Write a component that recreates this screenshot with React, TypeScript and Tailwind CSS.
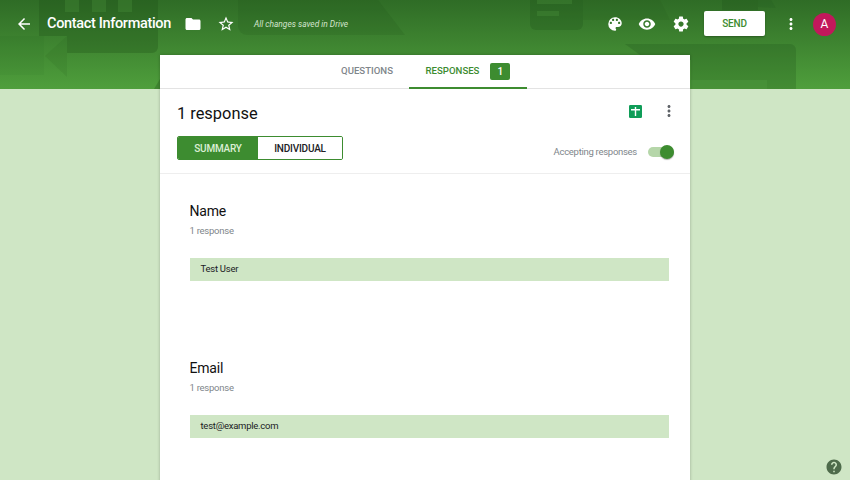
const FONT = "font-['Roboto','Liberation_Sans',sans-serif]";

function Icon({ d, size = 24, className = "" }: { d: string; size?: number; className?: string }) {
  return (
    <svg width={size} height={size} viewBox="0 0 24 24" fill="currentColor" className={className}>
      <path d={d} />
    </svg>
  );
}

const ICONS = {
  back: "M20 11H7.83l5.59-5.59L12 4l-8 8 8 8 1.41-1.41L7.83 13H20v-2z",
  folder: "M10 4H4c-1.1 0-2 .9-2 2v12c0 1.1.9 2 2 2h16c1.1 0 2-.9 2-2V8c0-1.1-.9-2-2-2h-8l-2-2z",
  star: "M22 9.24l-7.19-.62L12 2 9.19 8.63 2 9.24l5.46 4.73L5.82 21 12 17.27 18.18 21l-1.63-7.03L22 9.24zM12 15.4l-3.76 2.27 1-4.28-3.32-2.88 4.38-.38L12 6.1l1.71 4.04 4.38.38-3.32 2.88 1 4.28L12 15.4z",
  palette: "M12 3a9 9 0 0 0 0 18c.83 0 1.5-.67 1.5-1.5 0-.39-.15-.74-.39-1.01-.23-.26-.38-.61-.38-.99 0-.83.67-1.5 1.5-1.5H16c2.76 0 5-2.24 5-5 0-4.42-4.03-8-9-8zm-5.5 9c-.83 0-1.5-.67-1.5-1.5S5.67 9 6.5 9 8 9.67 8 10.5 7.33 12 6.5 12zm3-4C8.67 8 8 7.33 8 6.5S8.67 5 9.5 5s1.5.67 1.5 1.5S10.33 8 9.5 8zm5 0c-.83 0-1.5-.67-1.5-1.5S13.67 5 14.5 5s1.5.67 1.5 1.5S15.33 8 14.5 8zm3 4c-.83 0-1.5-.67-1.5-1.5S16.67 9 17.5 9s1.5.67 1.5 1.5-.67 1.5-1.5 1.5z",
  eye: "M12 4.5C7 4.5 2.73 7.61 1 12c1.73 4.39 6 7.5 11 7.5s9.27-3.11 11-7.5c-1.73-4.39-6-7.5-11-7.5zM12 17c-2.76 0-5-2.24-5-5s2.24-5 5-5 5 2.24 5 5-2.24 5-5 5zm0-8c-1.66 0-3 1.34-3 3s1.34 3 3 3 3-1.34 3-3-1.34-3-3-3z",
  gear: "M19.43 12.98c.04-.32.07-.64.07-.98s-.03-.66-.07-.98l2.11-1.65c.19-.15.24-.42.12-.64l-2-3.46c-.12-.22-.39-.3-.61-.22l-2.49 1c-.52-.4-1.08-.73-1.69-.98l-.38-2.65A.488.488 0 0 0 14 2h-4c-.25 0-.46.18-.49.42l-.38 2.65c-.61.25-1.17.59-1.69.98l-2.49-1c-.23-.09-.49 0-.61.22l-2 3.46c-.13.22-.07.49.12.64l2.11 1.65c-.04.32-.07.65-.07.98s.03.66.07.98l-2.11 1.65c-.19.15-.24.42-.12.64l2 3.46c.12.22.39.3.61.22l2.49-1c.52.4 1.08.73 1.69.98l.38 2.65c.03.24.24.42.49.42h4c.25 0 .46-.18.49-.42l.38-2.65c.61-.25 1.17-.59 1.69-.98l2.49 1c.23.09.49 0 .61-.22l2-3.46c.12-.22.07-.49-.12-.64l-2.11-1.65zM12 15.5c-1.93 0-3.5-1.57-3.5-3.5s1.57-3.5 3.5-3.5 3.5 1.57 3.5 3.5-1.57 3.5-3.5 3.5z",
  dots: "M12 8c1.1 0 2-.9 2-2s-.9-2-2-2-2 .9-2 2 .9 2 2 2zm0 2c-1.1 0-2 .9-2 2s.9 2 2 2 2-.9 2-2-.9-2-2-2zm0 6c-1.1 0-2 .9-2 2s.9 2 2 2 2-.9 2-2-.9-2-2-2z",
  help: "M12 2C6.48 2 2 6.48 2 12s4.48 10 10 10 10-4.48 10-10S17.52 2 12 2zm1 17h-2v-2h2v2zm2.07-7.75l-.9.92C13.45 12.9 13 13.5 13 15h-2v-.5c0-1.1.45-2.1 1.17-2.83l1.24-1.26c.37-.36.59-.86.59-1.41 0-1.1-.9-2-2-2s-2 .9-2 2H8c0-2.21 1.79-4 4-4s4 1.79 4 4c0 .88-.36 1.68-.93 2.25z",
};

// the faded form/list shapes behind the title bar
function HeaderPattern() {
  return (
    <svg width="850" height="89" viewBox="0 0 850 89" className="absolute left-0 top-0" aria-hidden="true">
      <g fill="#1d4f18">
        <path d="M39 0h119v47a6 6 0 0 1-6 6H67V36H39z" fillOpacity="0.3" />
        <path d="M67 36v41L45 56z" fillOpacity="0.1" />
        <path d="M0 36h44v39H0z" fillOpacity="0.05" />
        <path d="M154 89l6-10v10z" fillOpacity="0.3" />
        <path d="M238 0h140l27 35H247a9 9 0 0 1-9-9z" fillOpacity="0.16" />
        <path d="M583 0h77l10 20h-87z" fillOpacity="0.12" />
        <path d="M530 0h53v24a6 6 0 0 1-6 6h-41a6 6 0 0 1-6-6z" fillOpacity="0.25" />
        <path d="M722 0h36v10h-36z" fillOpacity="0.22" />
        <path d="M758 0h13l5 8-18-1z" fillOpacity="0.15" />
        <path d="M625 44h165a6 6 0 0 1 6 6v39H691V60h-44z" fillOpacity="0.24" />
      </g>
      <g fill="#5aa847" fillOpacity="0.22">
        <path d="M65 0h14v12H65zM92 0h14v12H92zM118 0h14v12h-14z" />
        <path d="M537 0h35v4h-35zM537 11h22v5h-22z" />
        <path d="M691 80h76v9h-76z" />
      </g>
    </svg>
  );
}

function Section({ title, value }: { title: string; value: string }) {
  return (
    <section className="h-[157px] pl-[29.5px] pr-[21px] pt-[27.5px]">
      <h2 className="text-[14px] leading-[18px] tracking-[-0.2px] text-[#111]">{title}</h2>
      <p className="mt-[4.5px] text-[9.5px] leading-[14px] tracking-[-0.25px] text-[#80868b]">1 response</p>
      <div className="mt-[20px] flex h-[23px] items-center bg-[#cfe6c5] px-[11px] text-[9.5px] tracking-[-0.25px] text-[#202124]">
        {value}
      </div>
    </section>
  );
}

export default function App() {
  return (
    <div className={`relative h-[480px] w-[850px] overflow-hidden bg-[#cfe6c5] ${FONT}`}>
      <header className="relative h-[89px] bg-gradient-to-b from-[#2f6c26] to-[#4f9f3c]">
        <HeaderPattern />
        <div className="relative flex h-[48px] items-center text-white">
          <Icon d={ICONS.back} size={18} className="ml-[14.5px]" />
          <h1 className="ml-[14.5px] text-[14.5px] font-medium leading-none tracking-[-0.34px]">Contact Information</h1>
          <Icon d={ICONS.folder} size={18} className="ml-[13.5px]" />
          <Icon d={ICONS.star} size={18} className="ml-[15px]" />
          <span className="ml-[18.5px] text-[8.4px] italic text-[#d3e4cd]">All changes saved in Drive</span>
          <div className="ml-auto flex items-center">
            <Icon d={ICONS.palette} size={18} />
            <Icon d={ICONS.eye} size={18} className="ml-[14.5px]" />
            <Icon d={ICONS.gear} size={18} className="ml-[15.5px]" />
            <button className="ml-[14.5px] -mt-[2px] h-[25px] w-[61px] rounded-[2px] bg-white text-[10px] font-medium tracking-[-0.2px] text-[#3d8c30] shadow-[0_1px_2px_rgba(0,0,0,0.3)]">
              SEND
            </button>
            <Icon d={ICONS.dots} size={18} className="ml-[17px]" />
            <div className="ml-[13px] mr-[14px] flex h-[23px] w-[23px] items-center justify-center rounded-full bg-[#c2185b] text-[12px]">
              A
            </div>
          </div>
        </div>
      </header>

      <main className="relative mx-auto -mt-[34px] w-[530px] bg-white shadow-[0_0_3px_rgba(0,0,0,0.25)]">
        <nav className="flex h-[34px] justify-center border-b border-[#e3e3e3] pl-[2px] text-[9.6px] font-medium">
          <div className="flex w-[84px] items-center justify-center text-[#80868b]">QUESTIONS</div>
          <div className="-mb-px flex w-[118px] items-center justify-center gap-[11px] border-b-2 border-[#3d8c30] text-[#3d8c30]">
            RESPONSES
            <span className="flex h-[17px] w-[20px] items-center justify-center rounded-[2px] bg-[#3d8c30] text-[10px] text-white">1</span>
          </div>
        </nav>

        <div className="h-[85px] border-b border-[#eeeeee] px-[17px] pt-[16px]">
          <div className="flex items-center justify-between">
            <h2 className="text-[16.4px] leading-[18px] text-[#111]">1 response</h2>
            <div className="-mr-[5px] -mt-[6px] flex items-center gap-[18px]">
              <svg width="13" height="13" viewBox="0 0 13 13" aria-hidden="true">
                <rect width="13" height="13" rx="1.2" fill="#0f9d58" />
                <path d="M2 4h3.8V2h1.4v2H11v1.4H7.2V11H5.8V5.4H2z" fill="#fff" />
              </svg>
              <Icon d={ICONS.dots} size={18} className="text-[#5f6368]" />
            </div>
          </div>
          <div className="mt-[13px] flex items-end justify-between">
            <div className="flex h-[24px] overflow-hidden rounded-[2px] border border-[#3d8c30] text-[10px] font-medium tracking-[-0.2px]">
              <div className="flex w-[80px] items-center justify-center bg-[#3d8c30] text-[#dcefd5]">SUMMARY</div>
              <div className="flex w-[84px] items-center justify-center bg-white text-[#202124]">INDIVIDUAL</div>
            </div>
            <div className="-mr-[1px] mb-[1px] flex items-center text-[9.5px] tracking-[-0.28px] text-[#80868b]">
              Accepting responses
              <div className="relative ml-[11px] h-[10px] w-[26px] rounded-full bg-[#b5d6a9]">
                <span className="absolute right-0 top-[-2px] h-[14px] w-[14px] rounded-full bg-[#3d8c30] shadow-[0_1px_1px_rgba(0,0,0,0.3)]" />
              </div>
            </div>
          </div>
        </div>

        <Section title="Name" value="Test User" />
        <Section title="Email" value="test@example.com" />
      </main>

      <Icon d={ICONS.help} size={18} className="absolute bottom-[4px] right-[7px] text-[#4e6b4b]" />
    </div>
  );
}
